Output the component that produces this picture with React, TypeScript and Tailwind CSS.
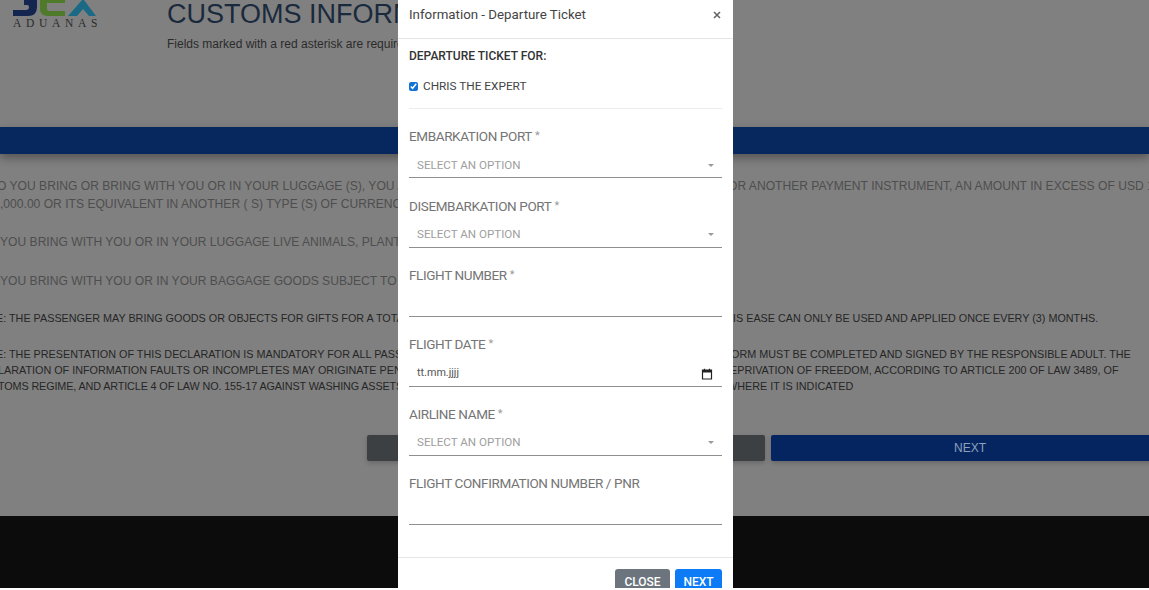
import React from 'react';

const requiredMark = <span className="ml-[3px] text-[11px] text-[#9a9a9a]">*</span>;

const fields = [
  { label: 'EMBARKATION PORT', required: true, kind: 'select' },
  { label: 'DISEMBARKATION PORT', required: true, kind: 'select' },
  { label: 'FLIGHT NUMBER', required: true, kind: 'text' },
  { label: 'FLIGHT DATE', required: true, kind: 'date' },
  { label: 'AIRLINE NAME', required: true, kind: 'select' },
  { label: 'FLIGHT CONFIRMATION NUMBER / PNR', required: false, kind: 'text' },
];

function Row({
  left,
  right,
  className,
  leftClass = '',
  rightClass = '',
}: {
  left: string;
  right?: string;
  className: string;
  leftClass?: string;
  rightClass?: string;
}) {
  return (
    <div className={`flex whitespace-nowrap ${className}`}>
      <div className="w-[398px] shrink-0 overflow-hidden">
        <div className={leftClass}>{left}</div>
      </div>
      <div className="ml-[335px] w-[416px] shrink-0 overflow-hidden">
        <div className={rightClass}>{right}</div>
      </div>
    </div>
  );
}

function Logo() {
  return (
    <div className="w-[110px] pl-[13px]">
      <svg width="84" height="16" viewBox="0 0 84 16" className="block">
        <path d="M11 0 H24 V7 Q24 16 15 16 H0 V10 H13 Q16 10 16 7 Q16 5 14 5 H11 Z" fill="#14264f" />
        <path d="M27 0 H52 V3 H34 V9 Q34 11 37 11 H52 V16 H35 Q27 16 27 9 Z" fill="#4f7a2a" />
        <path d="M55 16 L69 0 H71 L83 16 H76 L70 9 L64 16 Z" fill="#1a6a85" />
      </svg>
      <div className="mt-px font-['Liberation_Serif',serif] text-[11.5px] leading-[12px] tracking-[4.7px] text-[#2b2b2b]">ADUANAS</div>
    </div>
  );
}

function Field({ label, required, kind }: { label: string; required: boolean; kind: string }) {
  return (
    <div className="h-[69.4px]">
      <div className="flex h-[20px] items-center text-[13.5px] tracking-[-0.38px] text-[#757575]">
        {label}
        {required && requiredMark}
      </div>
      <div className="mt-[10px] flex h-[22px] items-center justify-between border-b border-[#8f8f8f] pb-[3px] pl-[8px] pr-[8px]">
        {kind === 'select' && (
          <>
            <span className="text-[11.6px] text-[#9e9e9e]">SELECT AN OPTION</span>
            <svg width="6" height="3" viewBox="0 0 6 3">
              <path d="M0 0 H6 L3 3 Z" fill="#9a9a9a" />
            </svg>
          </>
        )}
        {kind === 'date' && (
          <>
            <span className="text-[10.8px] text-[#555]">tt.mm.jjjj</span>
            <svg width="12" height="12" viewBox="0 0 12 12" className="mr-[1px]">
              <path d="M1.5 2 H10.5 V11 H1.5 Z" fill="none" stroke="#222" strokeWidth="1.2" />
              <path d="M1.5 2 H10.5 V4.5 H1.5 Z" fill="#222" />
              <path d="M3.5 0.8 V2 M8.5 0.8 V2" stroke="#222" strokeWidth="1.2" />
            </svg>
          </>
        )}
      </div>
    </div>
  );
}

export default function App() {
  return (
    <div className="relative h-[590px] w-[1149px] overflow-hidden bg-white font-['Liberation_Sans',sans-serif]">
      <div className="flex h-[588px] flex-col bg-[#808080]">
        {/* header */}
        <div className="flex h-[127px] shrink-0">
          <div className="w-[167px] shrink-0">
            <Logo />
          </div>
          <div className="w-[231px] shrink-0 overflow-hidden whitespace-nowrap">
            <div className="mt-[-1px] text-[27px] leading-[31px] text-[#1a2a3d]">CUSTOMS INFORMATION</div>
            <div className="mt-[7px] text-[12px] leading-[14px] text-[#2b2b2b]">Fields marked with a red asterisk are required</div>
          </div>
        </div>

        <div className="h-[27px] shrink-0 bg-[#07285f] shadow-[0_4px_10px_rgba(50,50,50,0.55)]" />

        {/* declaration text */}
        <div className="mt-[23px] shrink-0 text-[12.1px] leading-[18px] text-[#4e4e4e]">
          <Row
            className=""
            leftClass="-ml-[3px]"
            rightClass="-ml-[5px]"
            left="O YOU BRING OR BRING WITH YOU OR IN YOUR LUGGAGE (S), YOU ARE"
            right="OR ANOTHER PAYMENT INSTRUMENT, AN AMOUNT IN EXCESS OF USD 10"
          />
          <Row className="" left=",000.00 OR ITS EQUIVALENT IN ANOTHER ( S) TYPE (S) OF CURRENCY" />
          <Row className="mt-[20px]" left="YOU BRING WITH YOU OR IN YOUR LUGGAGE LIVE ANIMALS, PLANTS" />
          <Row className="mt-[21px]" left="YOU BRING WITH YOU OR IN YOUR BAGGAGE GOODS SUBJECT TO" />
        </div>
        <div className="mt-[20px] shrink-0 text-[10.8px] leading-[16px] text-[#262626]">
          <Row
            className=""
            leftClass="-ml-[4px]"
            left="E: THE PASSENGER MAY BRING GOODS OR OBJECTS FOR GIFTS FOR A TOTAL"
            right="IS EASE CAN ONLY BE USED AND APPLIED ONCE EVERY (3) MONTHS."
          />
          <Row
            className="mt-[20px]"
            leftClass="-ml-[4px]"
            rightClass="-ml-[2px]"
            left="E: THE PRESENTATION OF THIS DECLARATION IS MANDATORY FOR ALL PASS"
            right="ORM MUST BE COMPLETED AND SIGNED BY THE RESPONSIBLE ADULT. THE"
          />
          <Row
            className=""
            leftClass="-ml-[2px]"
            rightClass="-ml-[3px]"
            left="LARATION OF INFORMATION FAULTS OR INCOMPLETES MAY ORIGINATE PEN"
            right="EPRIVATION OF FREEDOM, ACCORDING TO ARTICLE 200 OF LAW 3489, OF"
          />
          <Row
            className=""
            leftClass="-ml-[2px] tracking-[-0.12px]"
            rightClass="-ml-[6px]"
            left="TOMS REGIME, AND ARTICLE 4 OF LAW NO. 155-17 AGAINST WASHING ASSETS"
            right="WHERE IT IS INDICATED"
          />
        </div>

        {/* step buttons */}
        <div className="ml-[367px] mt-[41px] flex h-[26px] shrink-0 gap-[6px]">
          <div className="w-[398px] shrink-0 rounded-[2px] bg-[#3c4043] shadow-[0_2px_5px_rgba(0,0,0,0.2)]" />
          <div className="flex w-[398px] shrink-0 items-center justify-center rounded-[2px] bg-[#052560] text-[12px] text-[#8fa0bb] shadow-[0_2px_5px_rgba(0,0,0,0.2)]">
            NEXT
          </div>
        </div>

        <div className="mt-auto h-[72px] shrink-0 bg-[#0c0c0c]" />
      </div>

      {/* modal */}
      <div className="absolute left-[398px] top-0 flex h-[588px] w-[335px] flex-col overflow-hidden bg-white font-['Roboto',sans-serif]">
        <div className="flex h-[39px] shrink-0 items-start justify-between border-b border-[#e4e4e4] pl-[11px] pr-[11px]">
          <span className="mt-[6px] text-[13.3px] leading-[18px] text-[#444]">Information - Departure Ticket</span>
          <svg width="8" height="8" viewBox="0 0 8 8" className="mt-[11px] mr-[1px]">
            <path d="M1 1 L7 7 M7 1 L1 7" stroke="#666" strokeWidth="1.6" />
          </svg>
        </div>
        <div className="mx-[11px] flex-1">
          <div className="mt-[9px] h-[16px] text-[12px] font-medium leading-[16px] text-[#333]">DEPARTURE TICKET FOR:</div>
          <label className="mt-[15px] flex h-[16px] items-center gap-[5px] text-[11.8px] text-[#444]">
            <input type="checkbox" defaultChecked readOnly className="m-0 mb-[2px] h-[9px] w-[9px] accent-[#1173d4]" />
            CHRIS THE EXPERT
          </label>
          <div className="mb-[17.4px] mt-[13px] h-px bg-[#ececec]" />
          {fields.map((f) => (
            <Field key={f.label} label={f.label} required={f.required} kind={f.kind} />
          ))}
        </div>
        <div className="h-[31px] shrink-0 border-t border-[#e6e6e6] pr-[11px] pt-[11px]">
          <div className="flex justify-end gap-[5px]">
            <button className="h-[25px] w-[55px] rounded-[3px] bg-[#6c757d] text-[12px] font-medium text-white">CLOSE</button>
            <button className="h-[25px] w-[47px] rounded-[3px] bg-[#0d7bf5] text-[12px] font-medium text-white">NEXT</button>
          </div>
        </div>
      </div>
    </div>
  );
}
